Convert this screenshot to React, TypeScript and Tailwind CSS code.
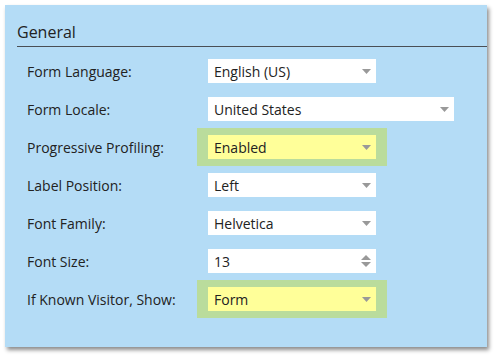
const rows = [
  { label: 'Form Language:', value: 'English (US)' },
  { label: 'Form Locale:', value: 'United States', wide: true },
  { label: 'Progressive Profiling:', value: 'Enabled', highlight: true },
  { label: 'Label Position:', value: 'Left' },
  { label: 'Font Family:', value: 'Helvetica' },
  { label: 'Font Size:', value: '13', spinner: true },
  { label: 'If Known Visitor, Show:', value: 'Form', highlight: true },
];

function Arrow() {
  return (
    <svg width="9" height="5" viewBox="0 0 9 5" className="shrink-0">
      <path d="M0 0H9L4.5 5Z" fill="#999" />
    </svg>
  );
}

function Spinner() {
  return (
    <svg width="10" height="12" viewBox="0 0 10 12" className="shrink-0">
      <path d="M5 0L10 5H0Z" fill="#999" />
      <path d="M0 7H10L5 12Z" fill="#999" />
    </svg>
  );
}

function Field({ value, wide, highlight, spinner }: { value: string; wide?: boolean; highlight?: boolean; spinner?: boolean }) {
  const box = (
    <div
      className={`h-[24px] flex items-center justify-between pl-[6px] pr-[5px] ${wide ? 'w-[246px]' : 'w-[168px]'} ${highlight ? 'bg-[#ffff99]' : 'bg-white'}`}
    >
      <span className="text-[14px] text-[#222]">{value}</span>
      {spinner ? <Spinner /> : <Arrow />}
    </div>
  );
  if (!highlight) return box;
  return <div className="-ml-[11px] px-[11px] py-[7px] bg-[#badc9c]">{box}</div>;
}

export default function App() {
  return (
    <div className="w-[496px] h-[356px] bg-white pt-[5px] pl-[5px]" style={{ fontFamily: '"Open Sans", sans-serif' }}>
      <div className="w-[482px] h-[342px] bg-[#b4dcf6] shadow-[2px_3px_4px_rgba(0,0,0,0.45)] pl-[12px] pt-[16px]">
        <h2 className="text-[16px] leading-[22px] text-[#222] pb-[3px] border-b border-[#4a4f55]">General</h2>
        <div className="pl-[10px] pt-[5px]">
          {rows.map((r) => (
            <div key={r.label} className="h-[38px] flex items-center">
              <div className="w-[181px] text-[14px] text-[#222]">{r.label}</div>
              <Field value={r.value} wide={r.wide} highlight={r.highlight} spinner={r.spinner} />
            </div>
          ))}
        </div>
      </div>
    </div>
  );
}
